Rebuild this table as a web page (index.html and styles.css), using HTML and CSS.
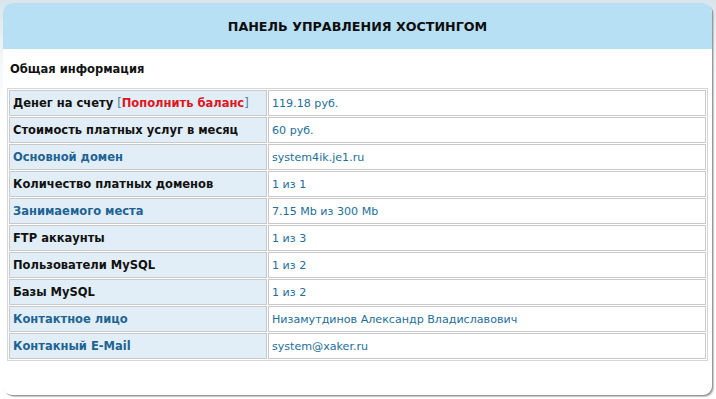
FILE: index.html
```html
<!DOCTYPE html>
<html lang="ru">
<head>
<meta charset="utf-8">
<title>Панель управления хостингом</title>
<link rel="stylesheet" href="styles.css">
</head>
<body>
<div class="panel">
  <div class="panel-head">ПАНЕЛЬ УПРАВЛЕНИЯ ХОСТИНГОМ</div>
  <div class="panel-body">
    <h2 class="section-title">Общая информация</h2>
    <table class="info">
      <tr>
        <th>Денег на счету <span class="bracket">[</span><a class="refill" href="#">Пополнить баланс</a><span class="bracket">]</span></th>
        <td>119.18 руб.</td>
      </tr>
      <tr>
        <th>Стоимость платных услуг в месяц</th>
        <td>60 руб.</td>
      </tr>
      <tr>
        <th class="accent">Основной домен</th>
        <td>system4ik.je1.ru</td>
      </tr>
      <tr>
        <th>Количество платных доменов</th>
        <td>1 из 1</td>
      </tr>
      <tr>
        <th class="accent">Занимаемого места</th>
        <td>7.15 Mb из 300 Mb</td>
      </tr>
      <tr>
        <th>FTP аккаунты</th>
        <td>1 из 3</td>
      </tr>
      <tr>
        <th>Пользователи MySQL</th>
        <td>1 из 2</td>
      </tr>
      <tr>
        <th>Базы MySQL</th>
        <td>1 из 2</td>
      </tr>
      <tr>
        <th class="accent">Контактное лицо</th>
        <td>Низамутдинов Александр Владиславович</td>
      </tr>
      <tr>
        <th class="accent">Контакный E-Mail</th>
        <td>system@xaker.ru</td>
      </tr>
    </table>
  </div>
</div>
</body>
</html>
```
FILE: styles.css
```css
html, body {
  margin: 0;
  padding: 0;
}

body {
  width: 716px;
  height: 399px;
  background: linear-gradient(#d9e4eb 0, #f4f7f9 60px, #ffffff 120px);
  font-family: "DejaVu Sans", Verdana, sans-serif;
  font-size: 11.5px;
  color: #111;
  padding: 3px 4px 4px 3px;
  box-sizing: border-box;
}

.panel {
  height: 392px;
  background: #fff;
  border-radius: 9px;
  box-shadow: 1px 1px 0 #9a9a9a, 2px 2px 1px #c4c4c4;
  overflow: hidden;
}

.panel-head {
  height: 46px;
  background: #b8e0f5;
  display: flex;
  align-items: center;
  justify-content: center;
  font-weight: bold;
  font-size: 12.7px;
  color: #0d0d0d;
  padding-top: 1px;
  box-sizing: border-box;
}

.panel-body {
  padding: 14px 4px 0 4px;
}

.section-title {
  margin: 0 0 12px 3px;
  font-size: 11.5px;
  font-weight: bold;
  color: #111;
  line-height: 13px;
}

.info {
  width: 701px;
  border: 1px solid #d6d6d6;
  border-spacing: 1px;
  border-collapse: separate;
}

.info th,
.info td {
  height: 24px;
  border: 1px solid #c9c9c9;
  padding: 0 0 0 3px;
  text-align: left;
  vertical-align: middle;
}

.info th {
  width: 253px;
  background: #e2eef7;
  font-weight: bold;
  color: #111;
}

.info th.accent {
  color: #1e6393;
}

.info td {
  font-size: 11.1px;
  color: #236e99;
  background: #fff;
}

.bracket {
  color: #4a7fa6;
  font-weight: normal;
}

.refill {
  color: #e0141c;
  text-decoration: none;
}
```
